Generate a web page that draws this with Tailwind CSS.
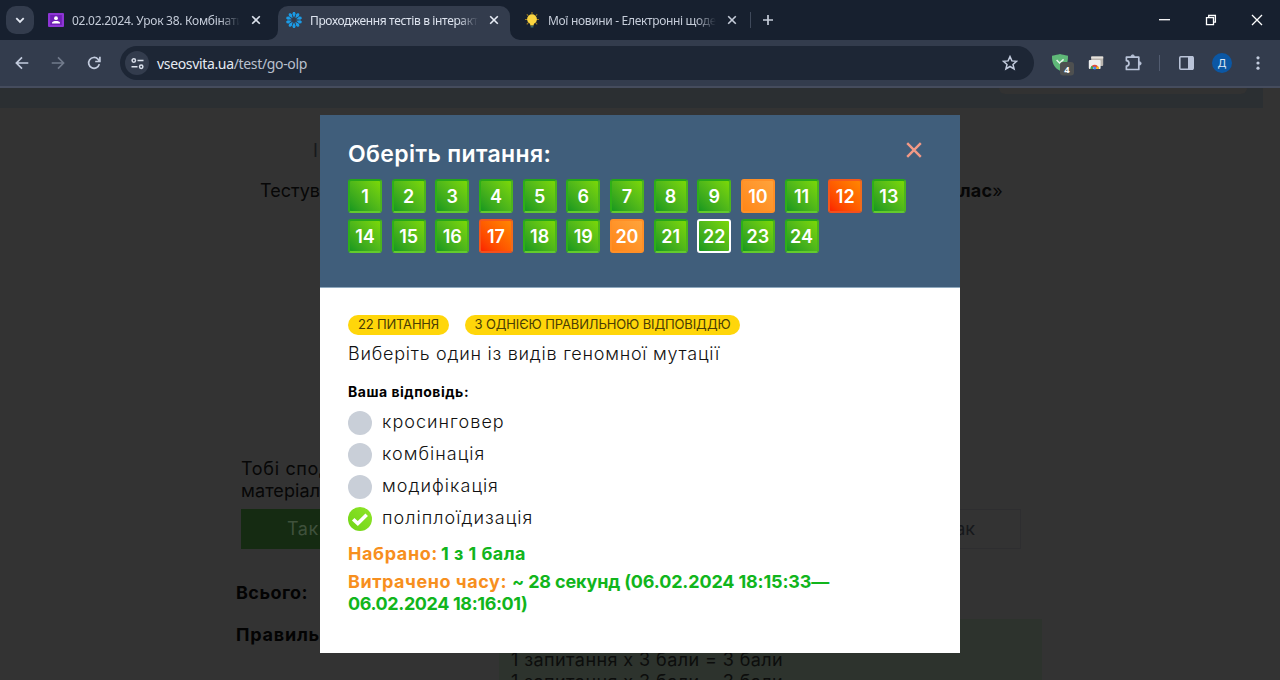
<!DOCTYPE html>
<html lang="uk">
<head>
<meta charset="utf-8">
<title>Проходження тестів</title>
<script src="https://cdn.jsdelivr.net/npm/@tailwindcss/browser@4"></script>
</head>
<body class="w-[1280px] h-[680px] overflow-hidden bg-[#333333] font-['Inter',sans-serif] text-black">
<header class="h-[88px] bg-[#333c4d] font-['Noto_Sans',sans-serif]">
  <div class="h-10 bg-[#17202f] flex items-start">
    <button class="ml-1.5 mt-1.5 size-7 rounded-[10px] bg-[#333c4d] flex items-center justify-center">
      <svg class="size-3" viewBox="0 0 12 12" fill="none" stroke="#e3e8f2" stroke-width="1.8"><path d="M2.3 4.2 6 7.9 9.7 4.2"/></svg>
    </button>
    <div class="ml-3.5 h-10 w-[220px] flex items-center">
      <svg class="w-4 h-[14px]" viewBox="0 0 16 14"><rect width="16" height="14" rx="1" fill="#8e35d6"/><rect x="2.2" y="2" width="11.6" height="10" fill="#6f1fb5"/><circle cx="8" cy="5.2" r="1.9" fill="#fff"/><path d="M4 10.6V9.8C4 8.500 6 7.900 8 7.900s4 .6 4 1.900v.8z" fill="#fff"/></svg>
      <span class="ml-2 mt-0.5 w-[168px] overflow-hidden whitespace-nowrap text-[12px] tracking-[-0.280px] text-[#c5ccd9] [mask-image:linear-gradient(to_right,black_88%,transparent)]">02.02.2024. Урок 38. Комбінати</span>
      <svg class="ml-[11px] size-2.5" viewBox="0 0 10 10" stroke="#dbe1ec" stroke-width="1.6"><path d="m1.200 1.200 7.600 7.600m0-7.600L1.200 8.800"/></svg>
    </div>
    <div class="relative ml-2.5 mt-1.5 h-[34px] w-[232px] rounded-t-[10px] bg-[#333c4d] flex items-center pb-1.5">
      <svg class="absolute -left-2.5 bottom-0 size-2.5" viewBox="0 0 10 10"><path d="M10 0v10H0A10 10 0 0 0 10 0" fill="#333c4d"/></svg>
      <svg class="absolute -right-2.5 bottom-0 size-2.5" viewBox="0 0 10 10"><path d="M0 0v10h10A10 10 0 0 1 0 0" fill="#333c4d"/></svg>
      <svg class="ml-2 size-4" viewBox="-8 -8 16 16" fill="#1b9be6"><path id="petal" d="M0-2.300 1.700-6 .9-8H-.9L-1.700-6z"/><use href="#petal" transform="rotate(36)"/><use href="#petal" transform="rotate(72)"/><use href="#petal" transform="rotate(108)"/><use href="#petal" transform="rotate(144)"/><use href="#petal" transform="rotate(180)"/><use href="#petal" transform="rotate(216)"/><use href="#petal" transform="rotate(252)"/><use href="#petal" transform="rotate(288)"/><use href="#petal" transform="rotate(324)"/></svg>
      <span class="ml-2 mt-0.5 w-[168px] overflow-hidden whitespace-nowrap text-[12px] tracking-[-0.360px] text-[#dde3ee] [mask-image:linear-gradient(to_right,black_88%,transparent)]">Проходження тестів в інтеракт</span>
      <svg class="ml-[11px] size-2.5" viewBox="0 0 10 10" stroke="#e8edf6" stroke-width="1.6"><path d="m1.200 1.200 7.600 7.600m0-7.600L1.200 8.800"/></svg>
    </div>
    <div class="ml-3.5 h-10 flex items-center">
      <svg class="size-4" viewBox="0 0 16 16"><g stroke="#9a7a22" stroke-width="1.200"><path d="M8 0v2M1 7.500h2M13 7.500h2M2.800 2.300l1.400 1.400M13.200 2.300l-1.400 1.400M2.800 12.300l1.400-1.400M13.200 12.300l-1.400-1.400"/></g><circle cx="8" cy="7.200" r="4.900" fill="#fbd540"/><path d="M5.800 11h4.400l-.6 2.600H6.400z" fill="#fbd540"/><rect x="6.600" y="13.800" width="2.800" height="1.700" fill="#3f6a66"/></svg>
      <span class="ml-2 mt-0.5 w-[168px] overflow-hidden whitespace-nowrap text-[12px] tracking-[-0.330px] text-[#c5ccd9] [mask-image:linear-gradient(to_right,black_88%,transparent)]">Мої новини - Електронні щоде</span>
      <svg class="ml-[11px] size-2.5" viewBox="0 0 10 10" stroke="#c5ccd9" stroke-width="1.6"><path d="m1.200 1.200 7.600 7.600m0-7.600L1.200 8.800"/></svg>
      <div class="ml-[13px] h-4 w-px bg-[#3f495b]"></div>
      <svg class="ml-3 size-[10px]" viewBox="0 0 10 10" stroke="#c5ccd9" stroke-width="1.7"><path d="M5 0v10M0 5h10"/></svg>
    </div>
    <div class="ml-auto mr-[17px] h-10 flex items-center gap-[35px]">
      <svg class="w-[11px] h-3" viewBox="0 0 11 12" stroke="#fff" stroke-width="1.300"><path d="M0 5.700h11"/></svg>
      <svg class="size-3 -mr-px" viewBox="0 0 12 12" fill="none" stroke="#fff" stroke-width="1.300"><path d="M1.500 3.600h7v7h-7zM3.700 3.400V1.500h6.700v6.700H8.700"/></svg>
      <svg class="size-3" viewBox="0 0 12 12" stroke="#fff" stroke-width="1.300"><path d="m1 1 10 10M11 1 1 11"/></svg>
    </div>
  </div>
  <div class="h-12 border-b-2 border-[#454c5d] flex items-center">
    <svg class="ml-[15px] size-3.5" viewBox="0 0 14 14" fill="none" stroke="#c3ccde" stroke-width="1.700"><path d="M13.300 7H1.500M7 1.400 1.400 7 7 12.600"/></svg>
    <svg class="ml-[22px] size-3.5" viewBox="0 0 14 14" fill="none" stroke="#727b8c" stroke-width="1.600"><path d="M.7 7h11.800M7 1.400 12.600 7 7 12.600"/></svg>
    <svg class="ml-[22px] size-3.5" viewBox="0 0 14 14" fill="none" stroke="#c3ccde" stroke-width="1.700"><path d="M12.300 8.100A5.400 5.400 0 1 1 11 3.200l1.600 1.900M12.900 .8v4.700H8.200"/></svg>
    <div class="ml-[19px] h-[34px] w-[914px] rounded-full bg-[#1d2635] flex items-center">
      <div class="ml-[5px] size-6 rounded-full bg-[#333c4d] flex items-center justify-center">
        <svg class="size-[13px]" viewBox="0 0 13 13" fill="none" stroke="#dbe1ec" stroke-width="1.500"><circle cx="2.800" cy="3.500" r="1.700"/><path d="M6.500 3.500h6M.5 9.700h6"/><circle cx="10.200" cy="9.700" r="1.700"/></svg>
      </div>
      <span class="ml-2 text-[14px] tracking-[-0.340px] text-[#b9c0cd] whitespace-nowrap"><span class="text-[#e6eaf2]">vseosvita.ua</span>/test/go-olp</span>
      <svg class="ml-auto mr-4 size-4" viewBox="0 0 16 16" fill="none" stroke="#c3ccde" stroke-width="1.500"><path d="m8 1.600 1.900 4.300 4.700.4-3.600 3.100 1.100 4.600L8 11.500 3.900 14 5 9.400 1.400 6.300l4.700-.4z"/></svg>
    </div>
    <svg class="ml-[17px] mt-0.5 w-6 h-6" viewBox="0 0 24 24"><path d="M1 3.700C5 3.100 6.500 2.500 9 2c2.500.5 4 1.100 8 1.700.2 7-2 12-8 15C3 15.700.8 10.700 1 3.700" fill="#5fb878"/><path d="m5.600 8 3 3 4-3.600" fill="none" stroke="#e8f5ec" stroke-width="1.500"/><rect x="9" y="10" width="14" height="13.500" rx="3" fill="#4e5050"/><text x="16" y="20.500" text-anchor="middle" font-size="9.500" font-weight="700" fill="#fff">4</text></svg>
    <svg class="ml-[13px] size-4" viewBox="0 0 16 16"><rect x="3.200" y="1.500" width="12" height="9.500" rx="1" fill="#b9b4ae"/><rect x="3.200" y="1.500" width="12" height="2" fill="#e6e1dc"/><rect x=".8" y="5" width="11.800" height="9" rx="1" fill="#eee"/><path d="M2.500 14a4.200 4.200 0 0 1 8.400 0H8.600a2 2 0 0 0-4 0z" fill="#e14b3b"/><path d="M2.500 14c0-1.500.7-2.600 1.500-3.200l1.400 1.800L4.800 14z" fill="#35a853"/><path d="M10.900 14c0-1.500-.5-2.400-1-3l-1.700 1.600.5 1.400z" fill="#f5bd18"/><circle cx="6.700" cy="13" r="1.500" fill="#4285f4"/></svg>
    <svg class="ml-5 w-[18px] h-[18px]" viewBox="0 0 18 18" fill="none" stroke="#b9c3d8" stroke-width="1.700"><path d="M2.400 3.200h12.400v12.300H2.400v-3.300c1.800-.1 2.600-1.200 2.600-2.700S4.200 6.900 2.400 6.700z" stroke-linejoin="round"/><path d="M7 2.600a1.700 1.700 0 0 1 3.400 0zM15.400 7.700a1.700 1.700 0 0 1 0 3.400z" fill="#b9c3d8" stroke-width="1"/></svg>
    <div class="ml-[17px] h-4 w-px bg-[#525c70]"></div>
    <svg class="ml-[19px] w-[15px] h-3.5" viewBox="0 0 15 14"><rect x=".8" y=".8" width="13.400" height="12.400" rx="1" fill="none" stroke="#b9c3d8" stroke-width="1.600"/><path d="M9 0h5v14H9z" fill="#b9c3d8"/></svg>
    <div class="ml-[18px] size-5 rounded-full bg-[#0b57a4] text-[#dfe9f7] text-[11px] leading-5 text-center">Д</div>
    <svg class="ml-6 w-1 h-3.5" viewBox="0 0 4 14" fill="#c3ccde"><circle cx="2" cy="1.800" r="1.600"/><circle cx="2" cy="7" r="1.600"/><circle cx="2" cy="12.200" r="1.600"/></svg>
  </div>
</header>

<main class="h-[592px] relative overflow-hidden text-[18px] leading-[22px]">
  <div class="h-5 w-[1263px] bg-[#2b2f32] flex justify-end"><div class="mr-4 h-1.5 w-[248px] rounded-b-md bg-[#323232]"></div></div>
  <div class="mt-8 pl-[313px] text-[#17191b] h-[22px]">І</div>
  <div class="mt-[18px] ml-[260px] w-[743px] h-[22px] flex justify-between text-[#070707]"><span>Тестув</span><span class="tracking-[0.220px]"><b class="font-bold">клас</b>»</span></div>
  <div class="mt-[256px] ml-[241px] w-[780px] text-[#070707]">
    <p class="tracking-[0.660px]">Тобі спод</p><p class="tracking-[0.100px]">матеріал</p>
    <div class="mt-[7px] mb-px flex justify-between">
      <div class="w-[380px] h-10 pl-[46px] leading-[40px] tracking-[0.500px] bg-[#152b12] text-[#3f513c]">Так</div>
      <div class="w-[380px] h-10 pr-[45px] leading-[38px] text-right border border-[#2e2e30] text-[#16181b]">Не так</div>
    </div>
  </div>
  <div class="ml-[236px] w-[806px] flex justify-between font-bold text-[#030303]">
    <div class="pt-8 space-y-5"><p class="tracking-[0.440px]">Всього:</p><p class="tracking-[0.790px]">Правиль</p></div>
    <div class="mt-[69px] h-20 w-[543px] bg-[#2d332d] pl-3 pt-[30px] font-normal tracking-[0.410px] text-[#0c0d0c]"><p>1 запитання х 3 бали = 3 бали</p><p>1 запитання х 3 бали = 3 бали</p></div>
  </div>

  <section class="absolute left-[320px] top-[27px] w-[640px] h-[538px] bg-white">
    <div class="h-[173px] bg-[#405e7b] border-b border-[#8fa9bf] px-7 pt-6 text-white">
      <div class="flex justify-between h-8">
        <h1 class="text-[23px] leading-[30px] font-semibold tracking-[0.370px] whitespace-nowrap">Оберіть питання:</h1>
        <svg class="mr-2.5 mt-[3px] size-4" viewBox="0 0 16 16" stroke="#f39a86" stroke-width="2.400"><path d="m1.200 1.200 13.600 13.600m0-13.600L1.200 14.800"/></svg>
      </div>
      <div id="grid" class="mt-2 flex flex-wrap gap-x-[9.660px] gap-y-1.5"></div>
    </div>
    <div class="px-7 pt-[27px]">
      <div class="flex gap-4 text-[13px] leading-[18px] text-[#4a3d05]">
        <span class="h-5 rounded-full bg-[#ffd60a] w-[101px] text-center tracking-[-0.190px]">22 ПИТАННЯ</span>
        <span class="h-5 rounded-full bg-[#ffd60a] w-[275px] text-center whitespace-nowrap tracking-[-0.120px]">З ОДНІЄЮ ПРАВИЛЬНОЮ ВІДПОВІДДЮ</span>
      </div>
      <p class="mt-2 font-light text-[#111] tracking-[0.750px]">Виберіть один із видів геномної мутації</p>
      <p class="mt-[17px] text-[14px] leading-5 font-bold tracking-[0.510px]">Ваша відповідь:</p>
      <ul class="mt-1 font-light text-[#111] tracking-[1.030px]">
        <li class="h-8 flex items-center"><i class="mt-px size-6 rounded-full bg-[#c9cfd8] mr-2.5"></i>кросинговер</li>
        <li class="h-8 flex items-center"><i class="mt-px size-6 rounded-full bg-[#c9cfd8] mr-2.5"></i>комбінація</li>
        <li class="h-8 flex items-center"><i class="mt-px size-6 rounded-full bg-[#c9cfd8] mr-2.5"></i>модифікація</li>
        <li class="h-8 flex items-center"><i class="mt-px size-6 rounded-full bg-linear-to-tr from-[#6fd414] to-[#8fe528] mr-2.5"><svg viewBox="0 0 24 24" fill="none" stroke="#fff" stroke-width="3.600"><path d="m5.200 12.300 4.600 4.300 8.900-8.800"/></svg></i>поліплоїдизація</li>
      </ul>
      <div class="mt-[9px] font-bold text-[#11b51c]">
        <p class="flex gap-[3px]"><span class="text-[#f78f1e] tracking-[0.610px]">Набрано:</span><span class="tracking-[0.460px]">1 з 1 бала</span></p>
        <p class="mt-1.5 flex gap-[5px] whitespace-nowrap"><span class="text-[#f78f1e] tracking-[0.540px]">Витрачено часу:</span><span class="tracking-[-0.150px]">~ 28 секунд (06.02.2024 18:15:33—</span></p>
        <p class="tracking-[-0.390px]">06.02.2024 18:16:01)</p>
      </div>
    </div>
  </section>
</main>
<script>
  const partial = [10, 20], wrong = [12, 17];
  const base = 'size-[34px] rounded-[3px] border-2 font-semibold text-[18px] leading-[31px] text-center bg-origin-border ';
  const ok = 'bg-linear-to-tr from-[#009420] to-[#80dc00] border-t-[#25a519] border-l-[#2daf18] border-r-[#4cb51c] border-b-[#62cb2c]';
  const cur = 'bg-linear-to-tr from-[#009420] to-[#80dc00] border-white';
  const part = 'bg-linear-to-tr from-[#ff8412] to-[#ffa53c] border-[#ff8f26]';
  const bad = 'bg-linear-to-tr from-[#fb0c00] to-[#ff8a00] border-t-[#f4571c] border-l-[#f4571c] border-r-[#f06a1c] border-b-[#f4501c]';
  for (let n = 1; n <= 24; n++) {
    const d = document.createElement('div');
    d.className = base + (n === 22 ? cur : partial.includes(n) ? part : wrong.includes(n) ? bad : ok);
    d.textContent = n;
    document.getElementById('grid').append(d);
  }
</script>
</body>
</html>
